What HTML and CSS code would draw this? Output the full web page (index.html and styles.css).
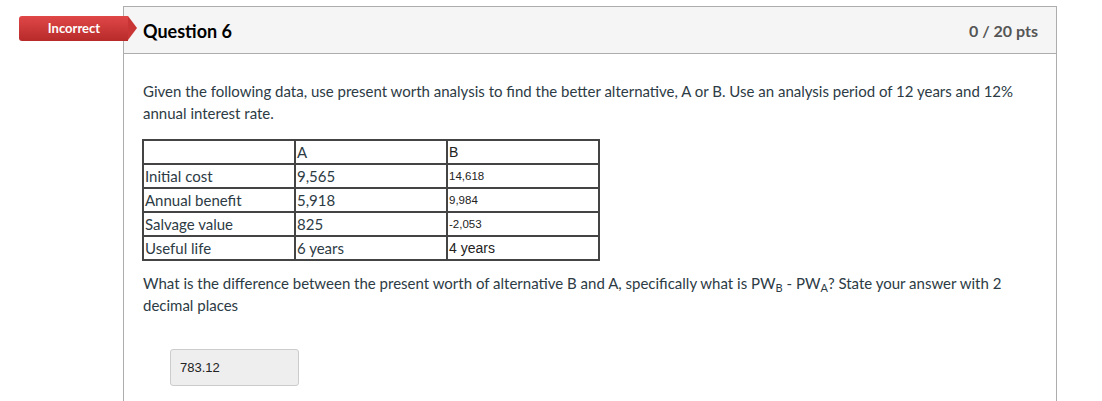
FILE: index.html
```html
<!DOCTYPE html>
<html>
<head>
<meta charset="utf-8">
<link rel="stylesheet" href="styles.css">
</head>
<body>
<div class="page">
  <div class="badge">Incorrect</div>
  <div class="question">
    <div class="header">
      <span class="title">Question 6</span>
      <span class="pts">0 / 20 pts</span>
    </div>
    <div class="content">
      <p class="text">Given the following data, use present worth analysis to find the better alternative, A or B. Use an analysis period of 12 years and 12% annual interest rate.</p>
      <table class="data">
        <tr><td></td><td>A</td><td class="arial big">B</td></tr>
        <tr><td>Initial cost</td><td>9,565</td><td class="arial">14,618</td></tr>
        <tr><td>Annual benefit</td><td>5,918</td><td class="arial">9,984</td></tr>
        <tr><td>Salvage value</td><td>825</td><td class="arial">-2,053</td></tr>
        <tr><td>Useful life</td><td>6 years</td><td class="arial big">4 years</td></tr>
      </table>
      <p class="text q2">What is the difference between the present worth of alternative B and A, specifically what is PW<sub>B</sub> - PW<sub>A</sub>? State your answer with 2 decimal places</p>
      <div class="answer">783.12</div>
    </div>
  </div>
</div>
</body>
</html>
```
FILE: styles.css
```css
html, body {
  margin: 0;
  padding: 0;
  background: #fff;
}
.page {
  position: relative;
  padding-top: 6px;
  font-family: Lato, "Open Sans", sans-serif;
  color: #2d3b45;
}
.badge {
  position: absolute;
  left: 19px;
  top: 16px;
  width: 109px;
  height: 25px;
  box-sizing: border-box;
  padding-left: 1px;
  line-height: 24px;
  text-align: center;
  color: #fff;
  font-weight: bold;
  font-size: 13px;
  background: linear-gradient(#e04747, #b72a2a);
  border-radius: 3px 0 0 3px;
  z-index: 2;
}
.badge::after {
  content: "";
  position: absolute;
  right: -9px;
  top: 0;
  width: 0;
  height: 0;
  border-top: 12.5px solid transparent;
  border-bottom: 12.5px solid transparent;
  border-left: 9px solid #c93535;
}
.question {
  margin-left: 123px;
  width: 934px;
  box-sizing: border-box;
  border: 1px solid #adadad;
  border-bottom: none;
  height: 420px;
}
.header {
  height: 47px;
  box-sizing: border-box;
  background: #f5f5f5;
  border-bottom: 1px solid #adadad;
  display: flex;
  align-items: center;
  justify-content: space-between;
  padding: 1px 18px 0 19px;
}
.title {
  font-size: 18px;
  font-weight: bold;
  color: #000;
}
.pts {
  font-size: 16px;
  font-weight: bold;
  color: #555;
}
.content {
  padding: 26px 40px 0 19px;
}
.text {
  margin: 0;
  font-size: 15px;
  line-height: 22px;
}
.q2 {
  margin-top: 11px;
}
.q2 sub {
  font-size: 11px;
  line-height: 0;
  vertical-align: -3px;
}
.data {
  margin-top: 15px;
  margin-left: -1px;
  width: 458px;
  border: 1px solid #444;
  border-spacing: 0;
  font-size: 15px;
  table-layout: fixed;
}
.data td {
  border: 1px solid #444;
  height: 22px;
  padding: 0 1px;
  line-height: 22px;
  color: #2d3b45;
}
.data td.arial {
  font-family: "Liberation Sans", Arial, sans-serif;
  font-size: 11.5px;
  color: #222;
}
.data td.arial.big {
  font-size: 14px;
}
.answer {
  margin-top: 33px;
  margin-left: 27px;
  width: 129px;
  height: 37px;
  box-sizing: border-box;
  background: #eee;
  border: 1px solid #ccc;
  border-radius: 3px;
  padding-left: 9px;
  line-height: 35px;
  font-family: "Liberation Sans", Arial, sans-serif;
  font-size: 13px;
  color: #222;
}
```
